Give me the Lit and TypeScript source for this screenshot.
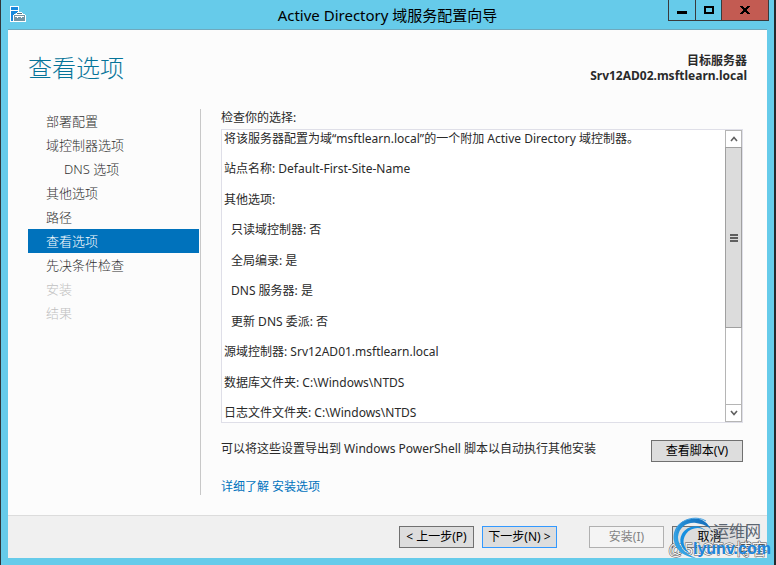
import { LitElement, html, css, svg } from "lit";
import { customElement, property } from "lit/decorators.js";
import { classMap } from "lit/directives/class-map.js";

interface Step {
  label: string;
  state?: "sub" | "current" | "disabled";
}

const STEPS: Step[] = [
  { label: "部署配置" },
  { label: "域控制器选项" },
  { label: "DNS 选项", state: "sub" },
  { label: "其他选项" },
  { label: "路径" },
  { label: "查看选项", state: "current" },
  { label: "先决条件检查" },
  { label: "安装", state: "disabled" },
  { label: "结果", state: "disabled" },
];

const REVIEW: { text: string; indent?: boolean }[] = [
  { text: "将该服务器配置为域“msftlearn.local”的一个附加 Active Directory 域控制器。" },
  { text: "站点名称: Default-First-Site-Name" },
  { text: "其他选项:" },
  { text: "只读域控制器: 否", indent: true },
  { text: "全局编录: 是", indent: true },
  { text: "DNS 服务器: 是", indent: true },
  { text: "更新 DNS 委派: 否", indent: true },
  { text: "源域控制器: Srv12AD01.msftlearn.local" },
  { text: "数据库文件夹: C:\\Windows\\NTDS" },
  { text: "日志文件文件夹: C:\\Windows\\NTDS" },
];

@customElement("title-bar")
export class TitleBar extends LitElement {
  @property() caption = "";

  static styles = css`
    :host {
      display: grid;
      grid-template-columns: 1fr auto 1fr;
      height: 29px;
      border-bottom: 1px solid #6fa9bd;
      color: #000;
    }
    .icon {
      margin: 6px 0 0 2px;
    }
    h1 {
      margin: 0;
      font-size: 15px;
      line-height: 30px;
      font-weight: 400;
      white-space: nowrap;
    }
    .controls {
      display: flex;
      justify-self: end;
      height: 21px;
      box-sizing: border-box;
      margin-right: -2px;
      border: 1px solid #3a3a3c;
      border-top: 0;
    }
    button {
      width: 27px;
      padding: 0;
      border: 0;
      border-right: 1px solid #3a3a3c;
      background: #66cbea;
      display: grid;
      place-items: center;
    }
    .max {
      width: 26px;
    }
    .close {
      width: 46px;
      border-right: 0;
      background: #c35b52;
    }
  `;

  render() {
    return html`
      <svg class="icon" width="16" height="16" viewBox="0 0 16 16" aria-hidden="true" shape-rendering="crispEdges">
        <path d="M0 0H9V6H4V16H0Z" fill="#fff" />
        <path d="M1 1H8V4H1ZM1 5H8V7H5V8H4V9H3V15H1Z" fill="#1788dc" />
        <path d="M7 6H12V7H13V8H15V9H16V16H4V15H3V9H4V8H6V7H7Z" fill="#fff" />
        <path d="M7 7H12V8H7Z" fill="#55717e" />
        <path d="M4 9H15V15H4Z" fill="#7395a4" />
        <path d="M5 10H14V11H12V12H11V11H8V12H7V11H5Z" fill="#fff" />
      </svg>
      <h1>${this.caption}</h1>
      <div class="controls">
        <button aria-label="最小化">
          <svg width="10" height="12" shape-rendering="crispEdges"><path d="M0 7H10V10H0Z" /></svg>
        </button>
        <button class="max" aria-label="最大化">
          <svg width="10" height="8" shape-rendering="crispEdges">
            <path fill-rule="evenodd" d="M0 0H10V8H0ZM2 2V6H8V2Z" />
          </svg>
        </button>
        <button class="close" aria-label="关闭">
          <svg width="10" height="8" shape-rendering="crispEdges">
            <path d="M0 0H3V1H4V2H6V1H7V0H10V1H9V2H8V3H7V5H8V6H9V7H10V8H7V7H6V6H4V7H3V8H0V7H1V6H2V5H3V3H2V2H1V1H0Z" />
          </svg>
        </button>
      </div>
    `;
  }
}

@customElement("step-list")
export class StepList extends LitElement {
  static styles = css`
    :host {
      display: block;
      border-right: 1px solid #c8c8c8;
      padding-right: 1px;
    }
    ol {
      margin: 0;
      padding: 0;
      list-style: none;
    }
    a {
      display: block;
      padding-left: 18px;
      font-size: 13px;
      line-height: 24px;
      font-weight: 300;
      color: #303030;
      text-decoration: none;
    }
    .sub {
      padding-left: 36px;
    }
    .current {
      background: #0072bc;
      color: #fff;
    }
    .disabled {
      color: #c0c0c0;
    }
  `;

  render() {
    return html`<nav>
      <ol>
        ${STEPS.map(
          (s) => html`<li>
            <a
              href="#"
              class=${classMap({
                sub: s.state === "sub",
                current: s.state === "current",
                disabled: s.state === "disabled",
              })}
              >${s.label}</a
            >
          </li>`
        )}
      </ol>
    </nav>`;
  }
}

@customElement("review-box")
export class ReviewBox extends LitElement {
  static styles = css`
    :host {
      display: flex;
      box-sizing: border-box;
      border: 1px solid #dfdfe8;
      background: #fff;
    }
    .lines {
      flex: 1;
      display: flex;
      flex-direction: column;
      justify-content: space-between;
      padding-left: 2px;
    }
    p {
      margin: 0;
      line-height: 18px;
      white-space: nowrap;
    }
    .indent {
      padding-left: 7px;
    }
    .bar {
      width: 17px;
      box-sizing: border-box;
      display: flex;
      flex-direction: column;
      border: 1px solid #b5b5b5;
    }
    button {
      height: 16px;
      padding: 0;
      border: 0;
      background: #fff;
      display: grid;
      place-items: center;
    }
    .track {
      flex: 1;
      display: grid;
      grid-template-rows: 182fr 76fr;
      border-bottom: 1px solid #b5b5b5;
    }
    .thumb {
      display: grid;
      place-items: center;
      background: #dcdcdc;
      border: 1px solid #a0a0a0;
      margin: 0 -1px;
    }
  `;

  private arrow(d: string) {
    return html`<svg width="8" height="6" viewBox="0 0 8 6">
      ${svg`<path d=${d} fill="none" stroke="#606060" stroke-width="1.6" />`}
    </svg>`;
  }

  render() {
    return html`
      <div class="lines">
        ${REVIEW.map((r) => html`<p class=${classMap({ indent: !!r.indent })}>${r.text}</p>`)}
      </div>
      <div class="bar">
        <button aria-label="向上滚动">${this.arrow("M1 5L4 1.5L7 5")}</button>
        <div class="track">
          <div class="thumb">
            <svg width="8" height="8" shape-rendering="crispEdges" aria-hidden="true">
              <path d="M0 0H8V2H0ZM0 3H8V5H0ZM0 6H8V8H0Z" fill="#606060" />
            </svg>
          </div>
        </div>
        <button aria-label="向下滚动">${this.arrow("M1 1L4 4.5L7 1")}</button>
      </div>
    `;
  }
}

@customElement("site-mark")
export class SiteMark extends LitElement {
  static styles = css`
    :host {
      display: block;
      width: 108px;
      height: 44px;
      pointer-events: none;
    }
    svg {
      display: block;
    }
    .blog {
      font: 16px "Liberation Sans", "Noto Sans CJK SC", sans-serif;
      fill: #f4f4f4;
      stroke: #555;
      stroke-width: 1px;
      paint-order: stroke;
    }
    .name {
      font: 16px "Noto Sans CJK SC", sans-serif;
      fill: #5c6672;
    }
    .domain {
      font: bold 16px "Liberation Sans", sans-serif;
      fill: #1d86dc;
    }
  `;

  render() {
    return html`<svg width="108" height="44" viewBox="0 0 108 44">
      <defs>
        <linearGradient id="ring" x1="0" y1="1" x2="1" y2="0">
          <stop offset="0" stop-color="#35b4f2" />
          <stop offset="1" stop-color="#1268b8" />
        </linearGradient>
      </defs>
      <text class="blog" x="0" y="38">@51CTO博客</text>
      <path
        fill="url(#ring)"
        d="M43 13C40 5 32 0 23 2C11 3 4 13 6 24C8 34 17 40 28 41C17 37 10 29 10 20C11 10 19 5 28 6C35 7 40 9 43 13Z"
      />
      <path fill="none" stroke="#3f9fe2" stroke-width="1" d="M38 4C30 -1 18 1 12 7C3 17 7 32 20 38" />
      <path fill="#168fe0" d="M39 15C33 9 23 10 18 17C13 24 16 32 23 37C13 33 10 24 14 17C19 8 32 6 39 15Z" />
      <text class="name" x="45" y="20">运维网</text>
      <text class="domain" x="25" y="37">lyunv.com</text>
    </svg>`;
  }
}

@customElement("app-root")
export class AppRoot extends LitElement {
  static styles = css`
    :host {
      display: flex;
      flex-direction: column;
      position: relative;
      box-sizing: border-box;
      min-height: 100vh;
      padding: 0 7px 7px;
      border-left: 1px solid #30363a;
      border-right: 2px solid #26282c;
      background: #66cbea;
      font: 12px "Noto Sans", "Noto Sans CJK SC", sans-serif;
      color: #2a2a2a;
    }
    .page {
      flex: 1;
      display: flex;
      flex-direction: column;
      padding: 0 20px 20px;
      background: #fcfcfc;
    }
    header {
      display: flex;
      justify-content: space-between;
      height: 79px;
    }
    h2 {
      margin: 0;
      padding-top: 20px;
      font-size: 24px;
      line-height: 36px;
      font-weight: 300;
      color: #067499;
    }
    .target {
      padding-top: 23px;
      line-height: 15px;
      font-weight: 700;
      text-align: right;
    }
    .body {
      flex: 1;
      display: grid;
      grid-template-columns: 173px 1fr;
      column-gap: 20px;
      padding-right: 4px;
    }
    main {
      display: flex;
      flex-direction: column;
    }
    .caption {
      line-height: 18px;
      padding-bottom: 2px;
    }
    review-box {
      flex: 1;
    }
    .export {
      display: flex;
      justify-content: space-between;
      padding-top: 17px;
    }
    .export span {
      line-height: 18px;
    }
    .more {
      margin: 17px 0 0;
      line-height: 16px;
    }
    .more a {
      color: #0072bc;
      text-decoration: none;
    }
    button {
      box-sizing: border-box;
      width: 75px;
      height: 22px;
      padding: 0;
      border: 1px solid #707070;
      background: #dddddd;
      font: inherit;
      line-height: 20px;
      color: #000;
      white-space: nowrap;
    }
    .script {
      width: 92px;
    }
    .next {
      border-color: #3399ff;
    }
    .install {
      border-color: #b0b0b0;
      background: #f4f4f4;
      color: #838383;
      margin-left: 24px;
    }
    footer {
      display: flex;
      justify-content: flex-end;
      gap: 8px;
      padding: 10px 20px;
      border-top: 1px solid #dcdcdc;
      background: #f0f0f0;
    }
    site-mark {
      position: absolute;
      right: -2px;
      bottom: 4px;
    }
  `;

  render() {
    return html`
      <title-bar caption="Active Directory 域服务配置向导"></title-bar>
      <div class="page">
        <header>
          <h2>查看选项</h2>
          <div class="target">目标服务器<br />Srv12AD02.msftlearn.local</div>
        </header>
        <div class="body">
          <step-list></step-list>
          <main>
            <div class="caption">检查你的选择:</div>
            <review-box></review-box>
            <div class="export">
              <span>可以将这些设置导出到 Windows PowerShell 脚本以自动执行其他安装</span>
              <button class="script">查看脚本(V)</button>
            </div>
            <p class="more"><a href="#">详细了解 安装选项</a></p>
          </main>
        </div>
      </div>
      <footer>
        <button>&lt; 上一步(P)</button>
        <button class="next">下一步(N) &gt;</button>
        <button class="install" disabled>安装(I)</button>
        <button>取消</button>
      </footer>
      <site-mark></site-mark>
    `;
  }
}
